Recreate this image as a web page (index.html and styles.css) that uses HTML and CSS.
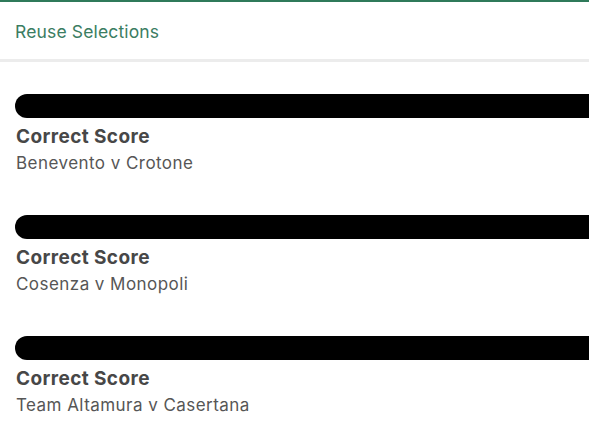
FILE: index.html
```
<!DOCTYPE html>
<html>
<head>
<meta charset="utf-8">
<link rel="stylesheet" href="styles.css">
</head>
<body>
<div class="page">
  <header class="header">
    <span class="reuse">Reuse Selections</span>
  </header>
  <ul class="list">
    <li class="item">
      <div class="redact"></div>
      <div class="market">Correct Score</div>
      <div class="event">Benevento v Crotone</div>
    </li>
    <li class="item">
      <div class="redact"></div>
      <div class="market">Correct Score</div>
      <div class="event">Cosenza v Monopoli</div>
    </li>
    <li class="item">
      <div class="redact"></div>
      <div class="market">Correct Score</div>
      <div class="event">Team Altamura v Casertana</div>
    </li>
  </ul>
</div>
</body>
</html>
```
FILE: styles.css
```
html, body {
  margin: 0;
  padding: 0;
  background: #ffffff;
}
body {
  font-family: Inter, "Liberation Sans", Arial, sans-serif;
  width: 589px;
  height: 436px;
  overflow: hidden;
}
.page {
  display: flex;
  flex-direction: column;
}
.header {
  border-top: 2px solid #2f7a5a;
  height: 57px;
  border-bottom: 3px solid #ececec;
  display: flex;
  align-items: center;
  padding-left: 15px;
  box-sizing: content-box;
}
.reuse {
  color: #3b7d62;
  font-size: 17.5px;
  letter-spacing: 0.15px;
  position: relative;
  top: 1px;
}
.list {
  list-style: none;
  margin: 0;
  padding: 0;
}
.item {
  padding: 32px 0 9px 15px;
}
.redact {
  height: 24px;
  background: #000;
  border-radius: 12px 0 0 12px;
}
.market {
  margin-top: 7px;
  height: 24px;
  line-height: 24px;
  font-size: 19px;
  font-weight: 700;
  color: #474747;
  letter-spacing: 0.4px;
  padding-left: 1px;
}
.event {
  margin-top: 3px;
  height: 22px;
  line-height: 22px;
  font-size: 17px;
  color: #565656;
  letter-spacing: 0.45px;
  padding-left: 1px;
}
```
